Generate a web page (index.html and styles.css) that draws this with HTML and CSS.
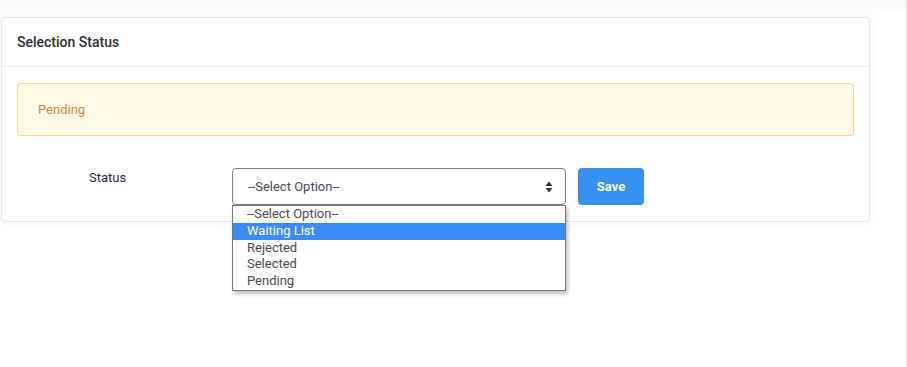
FILE: index.html
```html
<!DOCTYPE html>
<html>
<head>
<meta charset="utf-8">
<link rel="stylesheet" href="styles.css">
</head>
<body>
<div class="page">
  <div class="card">
    <div class="card-header">Selection Status</div>
    <div class="card-body">
      <div class="alert">Pending</div>
      <div class="form-row">
        <label class="label">Status</label>
        <div class="select-wrap">
          <div class="select">
            <span>--Select Option--</span>
            <svg class="arrows" width="8" height="12" viewBox="0 0 8 12"><path d="M4 0.5 L7.5 5 H0.5 Z M4 11.5 L7.5 7 H0.5 Z" fill="#333"/></svg>
          </div>
          <ul class="dropdown">
            <li>--Select Option--</li>
            <li class="active">Waiting List</li>
            <li>Rejected</li>
            <li>Selected</li>
            <li>Pending</li>
          </ul>
        </div>
        <button class="btn">Save</button>
      </div>
    </div>
  </div>
</div>
</body>
</html>
```
FILE: styles.css
```css
* { box-sizing: border-box; }
html, body { margin: 0; padding: 0; background: #fff; }
body { font-family: Roboto, "Noto Sans", sans-serif; }
.page {
  width: 907px;
  height: 367px;
  border-right: 1px solid #e3e3ea;
  padding: 17px 0 0 1px;
  background: linear-gradient(#f8f8f8 0, #fcfcfc 10px, #fff 17px);
}
.card {
  width: 869px;
  background: #fff;
  border: 1px solid #e6e6e6;
  border-radius: 4px;
  box-shadow: 0 0 12px rgba(0,0,0,0.04);
}
.card-header {
  height: 49px;
  display: flex;
  align-items: center;
  padding: 0 15px;
  border-bottom: 1px solid #ebebeb;
  font-size: 14px;
  font-weight: 500;
  color: #2b2f36;
}
.card-body { padding: 16px 15px 16px 15px; }
.alert {
  height: 53px;
  border: 1px solid #fdd27c;
  border-radius: 4px;
  background: #fff8e7;
  color: #c48a42;
  font-size: 13px;
  display: flex;
  align-items: center;
  padding-left: 20px;
}
.form-row {
  display: flex;
  align-items: flex-start;
  margin-top: 32px;
}
.label {
  width: 215px;
  padding-left: 72px;
  padding-top: 2px;
  font-size: 13px;
  color: #1f2a44;
}
.select-wrap { position: relative; width: 334px; }
.select {
  height: 37px;
  border: 1px solid #7a7f87;
  border-radius: 4px;
  display: flex;
  align-items: center;
  justify-content: space-between;
  padding: 0 12px 0 15px;
  font-size: 13px;
  color: #454a55;
}
.arrows { display: block; }
.dropdown {
  position: absolute;
  left: 0;
  top: 37px;
  width: 334px;
  margin: 0;
  padding: 0;
  list-style: none;
  background: #fff;
  border: 1px solid #767676;
  box-shadow: 2px 3px 4px rgba(0,0,0,0.25);
  font-size: 13px;
  color: #4a4a4a;
  z-index: 5;
}
.dropdown li {
  height: 16.8px;
  line-height: 16.8px;
  padding-left: 14px;
}
.dropdown li.active { background: #3a8bf5; color: #fff; }
.btn {
  margin-left: 12px;
  width: 66px;
  height: 37px;
  border: none;
  border-radius: 4px;
  background: #3690f0;
  color: #fff;
  font-family: Roboto, sans-serif;
  font-size: 13px;
  font-weight: 700;
}
```
